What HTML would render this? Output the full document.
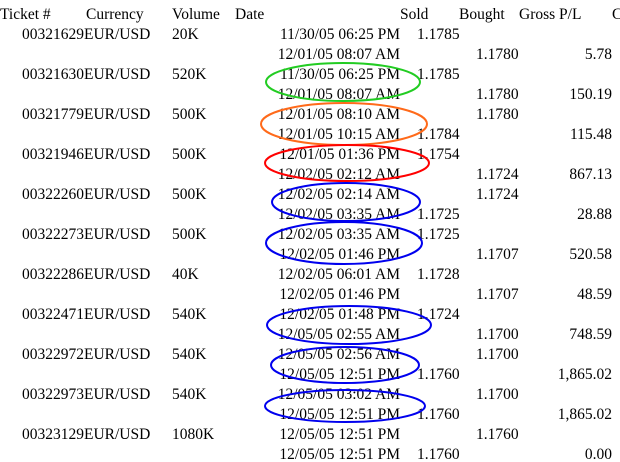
<!DOCTYPE html>
<html><head><meta charset="utf-8"><style>
html,body{margin:0;padding:0;background:#fff;width:620px;height:462px;overflow:hidden}
body{position:relative;font-family:"Liberation Serif",serif;font-size:15.5px;color:#000}
.r{position:absolute;left:0;width:620px;height:20px;line-height:20px}
.r span{position:absolute;top:0;white-space:nowrap}
.t{left:22px}
.c{left:84px}
.v{left:172px}
.d{right:220px}
.s{left:417px}
.b{left:476px}
.g{right:8px}
svg{position:absolute;left:0;top:0}
</style></head><body>
<div class="r h" style="top:5px"><span style="left:0">Ticket #</span><span style="left:86px">Currency</span><span style="left:172px">Volume</span><span style="left:235px">Date</span><span style="left:400px">Sold</span><span style="left:459px">Bought</span><span style="left:519px">Gross P/L</span><span style="left:612px">C</span></div>
<div class="r" style="top:25px"><span class="t">00321629</span><span class="c">EUR/USD</span><span class="v">20K</span><span class="d">11/30/05 06:25 PM</span><span class="s">1.1785</span></div>
<div class="r" style="top:45px"><span class="d">12/01/05 08:07 AM</span><span class="b">1.1780</span><span class="g">5.78</span></div>
<div class="r" style="top:65px"><span class="t">00321630</span><span class="c">EUR/USD</span><span class="v">520K</span><span class="d">11/30/05 06:25 PM</span><span class="s">1.1785</span></div>
<div class="r" style="top:85px"><span class="d">12/01/05 08:07 AM</span><span class="b">1.1780</span><span class="g">150.19</span></div>
<div class="r" style="top:105px"><span class="t">00321779</span><span class="c">EUR/USD</span><span class="v">500K</span><span class="d">12/01/05 08:10 AM</span><span class="b">1.1780</span></div>
<div class="r" style="top:125px"><span class="d">12/01/05 10:15 AM</span><span class="s">1.1784</span><span class="g">115.48</span></div>
<div class="r" style="top:145px"><span class="t">00321946</span><span class="c">EUR/USD</span><span class="v">500K</span><span class="d">12/01/05 01:36 PM</span><span class="s">1.1754</span></div>
<div class="r" style="top:165px"><span class="d">12/02/05 02:12 AM</span><span class="b">1.1724</span><span class="g">867.13</span></div>
<div class="r" style="top:185px"><span class="t">00322260</span><span class="c">EUR/USD</span><span class="v">500K</span><span class="d">12/02/05 02:14 AM</span><span class="b">1.1724</span></div>
<div class="r" style="top:205px"><span class="d">12/02/05 03:35 AM</span><span class="s">1.1725</span><span class="g">28.88</span></div>
<div class="r" style="top:225px"><span class="t">00322273</span><span class="c">EUR/USD</span><span class="v">500K</span><span class="d">12/02/05 03:35 AM</span><span class="s">1.1725</span></div>
<div class="r" style="top:245px"><span class="d">12/02/05 01:46 PM</span><span class="b">1.1707</span><span class="g">520.58</span></div>
<div class="r" style="top:265px"><span class="t">00322286</span><span class="c">EUR/USD</span><span class="v">40K</span><span class="d">12/02/05 06:01 AM</span><span class="s">1.1728</span></div>
<div class="r" style="top:285px"><span class="d">12/02/05 01:46 PM</span><span class="b">1.1707</span><span class="g">48.59</span></div>
<div class="r" style="top:305px"><span class="t">00322471</span><span class="c">EUR/USD</span><span class="v">540K</span><span class="d">12/02/05 01:48 PM</span><span class="s">1.1724</span></div>
<div class="r" style="top:325px"><span class="d">12/05/05 02:55 AM</span><span class="b">1.1700</span><span class="g">748.59</span></div>
<div class="r" style="top:345px"><span class="t">00322972</span><span class="c">EUR/USD</span><span class="v">540K</span><span class="d">12/05/05 02:56 AM</span><span class="b">1.1700</span></div>
<div class="r" style="top:365px"><span class="d">12/05/05 12:51 PM</span><span class="s">1.1760</span><span class="g">1,865.02</span></div>
<div class="r" style="top:385px"><span class="t">00322973</span><span class="c">EUR/USD</span><span class="v">540K</span><span class="d">12/05/05 03:02 AM</span><span class="b">1.1700</span></div>
<div class="r" style="top:405px"><span class="d">12/05/05 12:51 PM</span><span class="s">1.1760</span><span class="g">1,865.02</span></div>
<div class="r" style="top:425px"><span class="t">00323129</span><span class="c">EUR/USD</span><span class="v">1080K</span><span class="d">12/05/05 12:51 PM</span><span class="b">1.1760</span></div>
<div class="r" style="top:445px"><span class="d">12/05/05 12:51 PM</span><span class="s">1.1760</span><span class="g">0.00</span></div>
<svg width="620" height="462" fill="none" stroke-width="2">
<ellipse cx="343" cy="82" rx="77" ry="19" stroke="#22cc22"/>
<ellipse cx="344" cy="124" rx="83" ry="21" stroke="#ff6a1a"/>
<ellipse cx="347" cy="163" rx="82" ry="18" stroke="#ff0000"/>
<ellipse cx="346" cy="202" rx="74" ry="19" stroke="#0000ee"/>
<ellipse cx="344" cy="243" rx="78" ry="21" stroke="#0000ee"/>
<ellipse cx="349" cy="325" rx="82" ry="19" stroke="#0000ee"/>
<ellipse cx="345" cy="365" rx="74" ry="18" stroke="#0000ee"/>
<ellipse cx="345" cy="406" rx="80" ry="16" stroke="#0000ee"/>
</svg>
</body></html>
